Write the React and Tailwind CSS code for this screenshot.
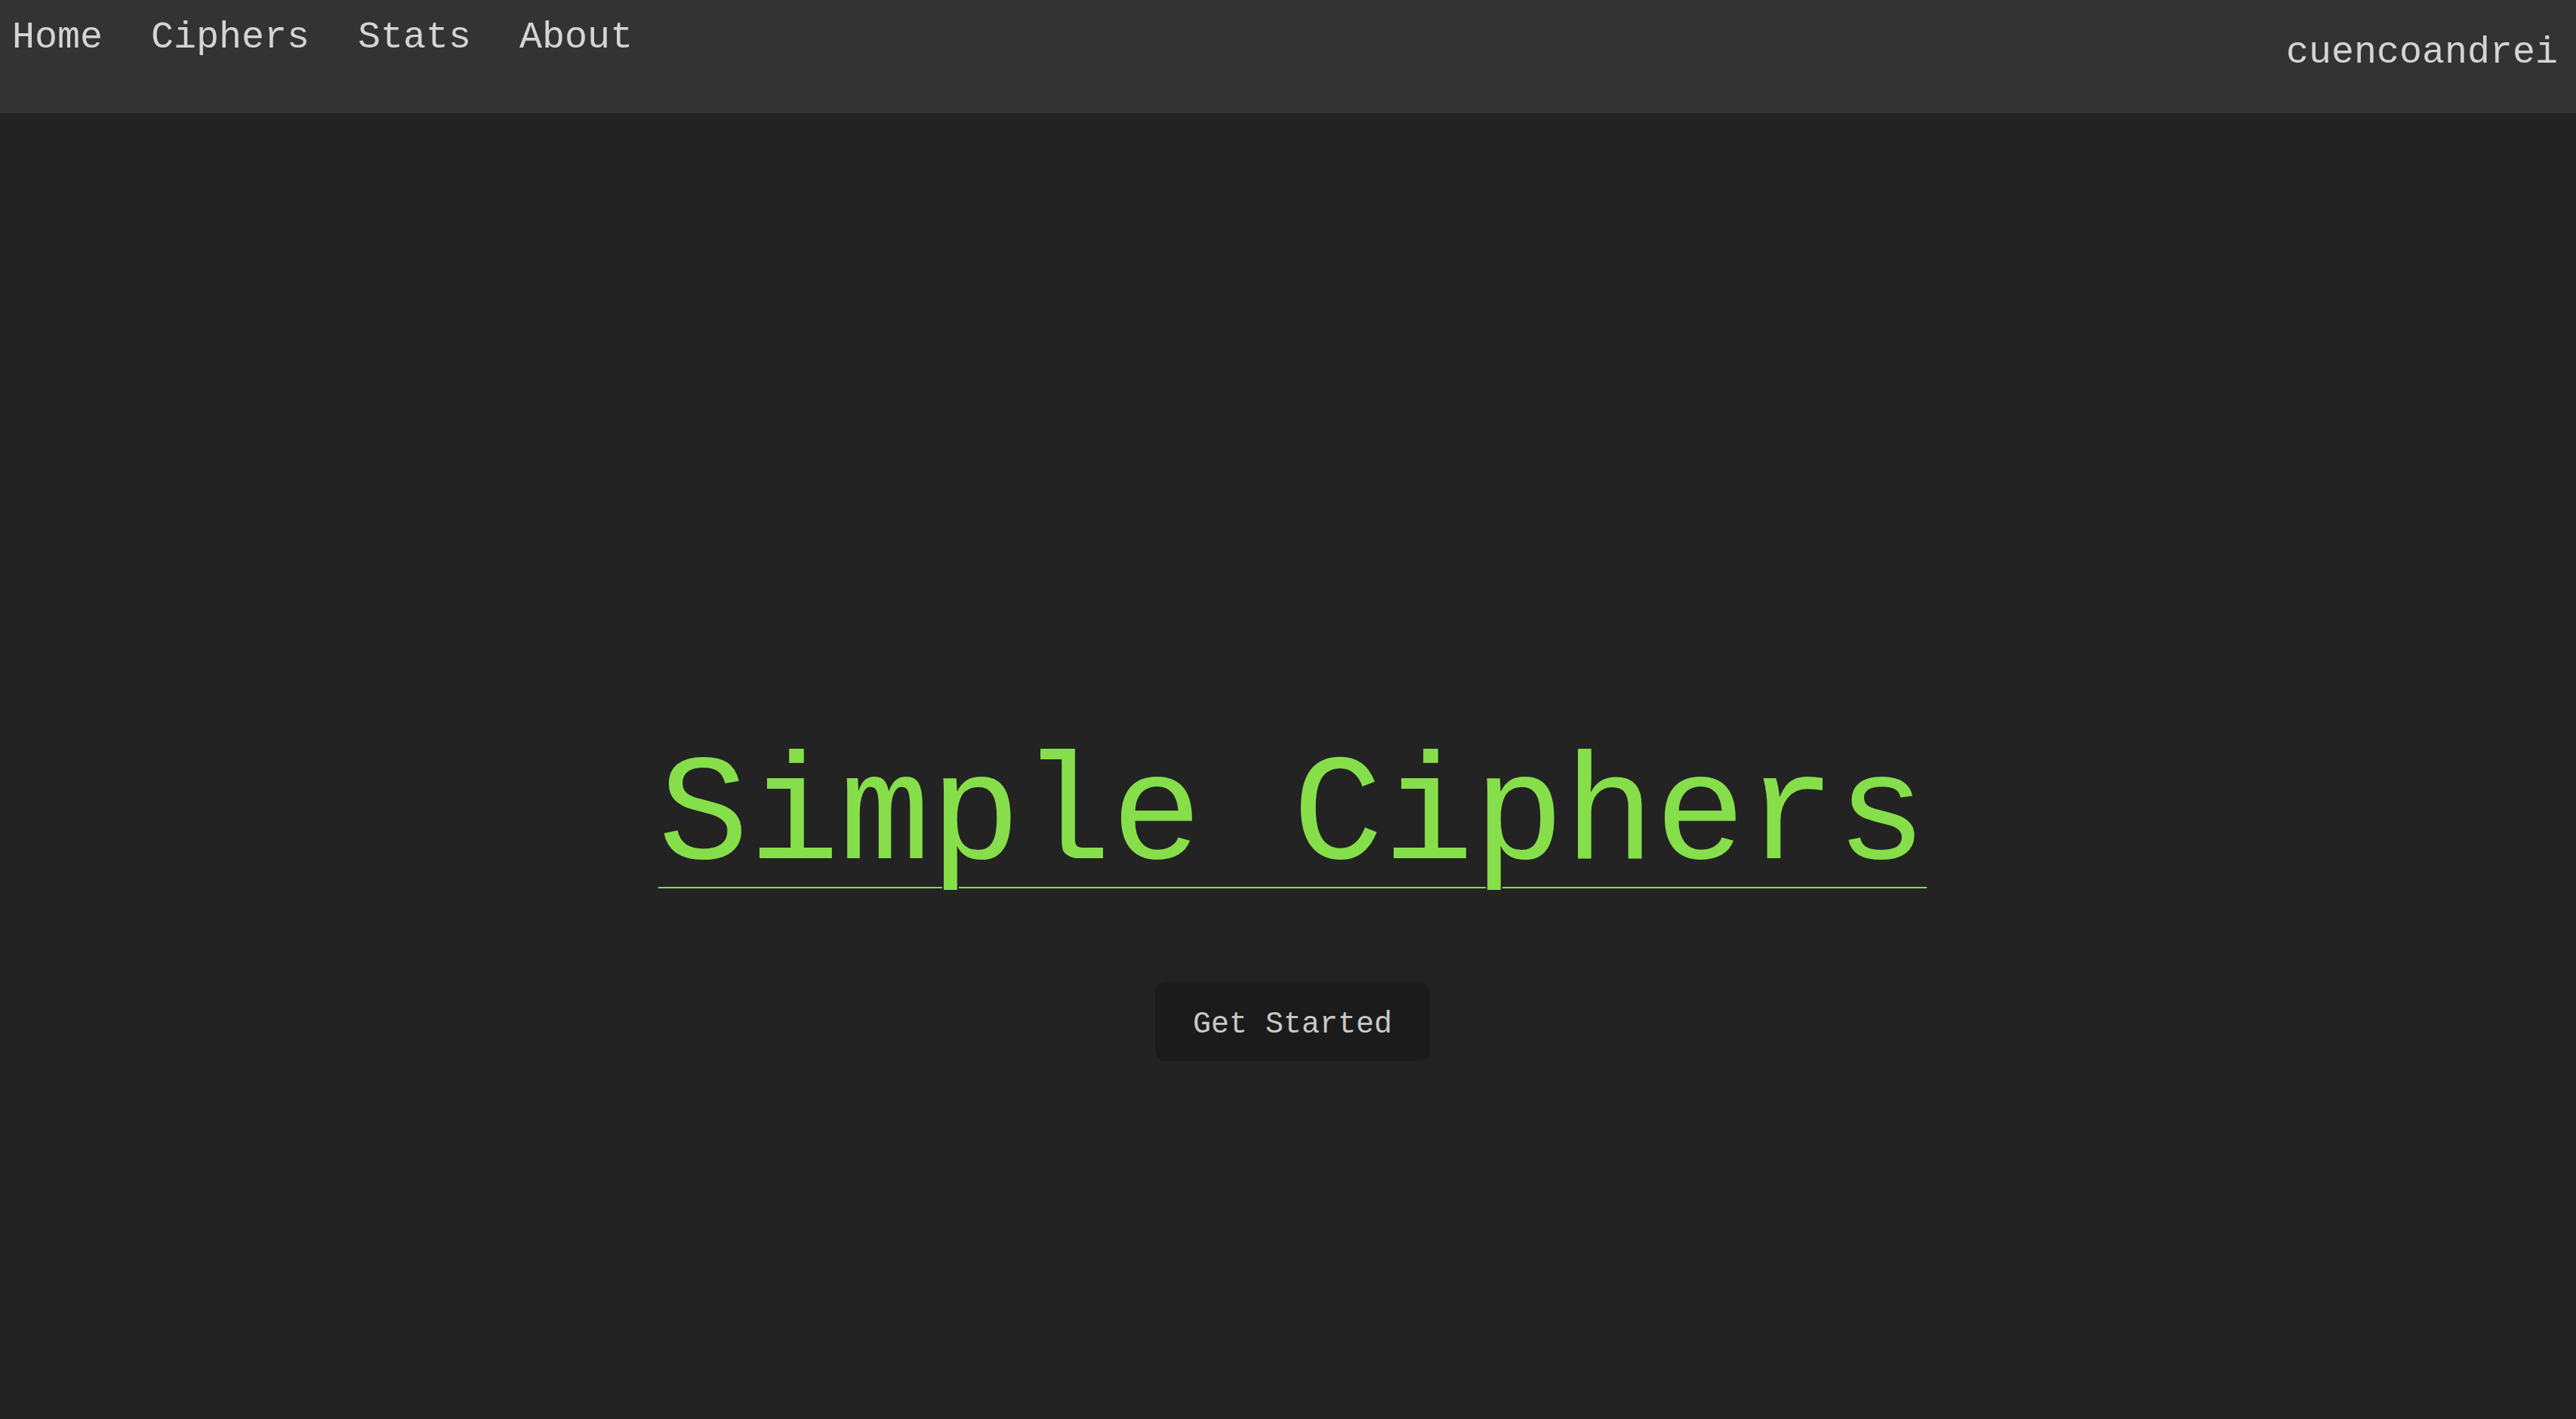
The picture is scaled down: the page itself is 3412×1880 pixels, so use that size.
import React from 'react';

const mono = "font-['Liberation_Mono','DejaVu_Sans_Mono',monospace]";

const links = ['Home', 'Ciphers', 'Stats', 'About'];

function Header() {
  return (
    <header className="h-[150px] bg-[#333333] flex justify-between">
      <nav className="flex gap-16 pl-4 pt-[25px]">
        {links.map((l) => (
          <a key={l} href="#" className="text-[50px] leading-none font-light text-[#d4d4d4]">
            {l}
          </a>
        ))}
      </nav>
      <div className="pr-6 pt-[45px] text-[50px] leading-none font-light text-[#d4d4d4]">
        cuencoandrei
      </div>
    </header>
  );
}

export default function App() {
  return (
    <div className={`min-h-screen bg-[#232323] ${mono}`}>
      <Header />
      <main className="h-[1730px] flex flex-col items-center pl-3 pt-[834px]">
        <h1 className="text-[200px] leading-none font-light text-[#86df4a] underline decoration-2 underline-offset-[38px]">
          Simple Ciphers
        </h1>
        <button className="mt-[117px] rounded-[14px] bg-[#1b1b1b] px-[50px] pt-[37px] pb-[28px] text-[40px] leading-none font-light text-[#c8c8c8]">
          Get Started
        </button>
      </main>
    </div>
  );
}
